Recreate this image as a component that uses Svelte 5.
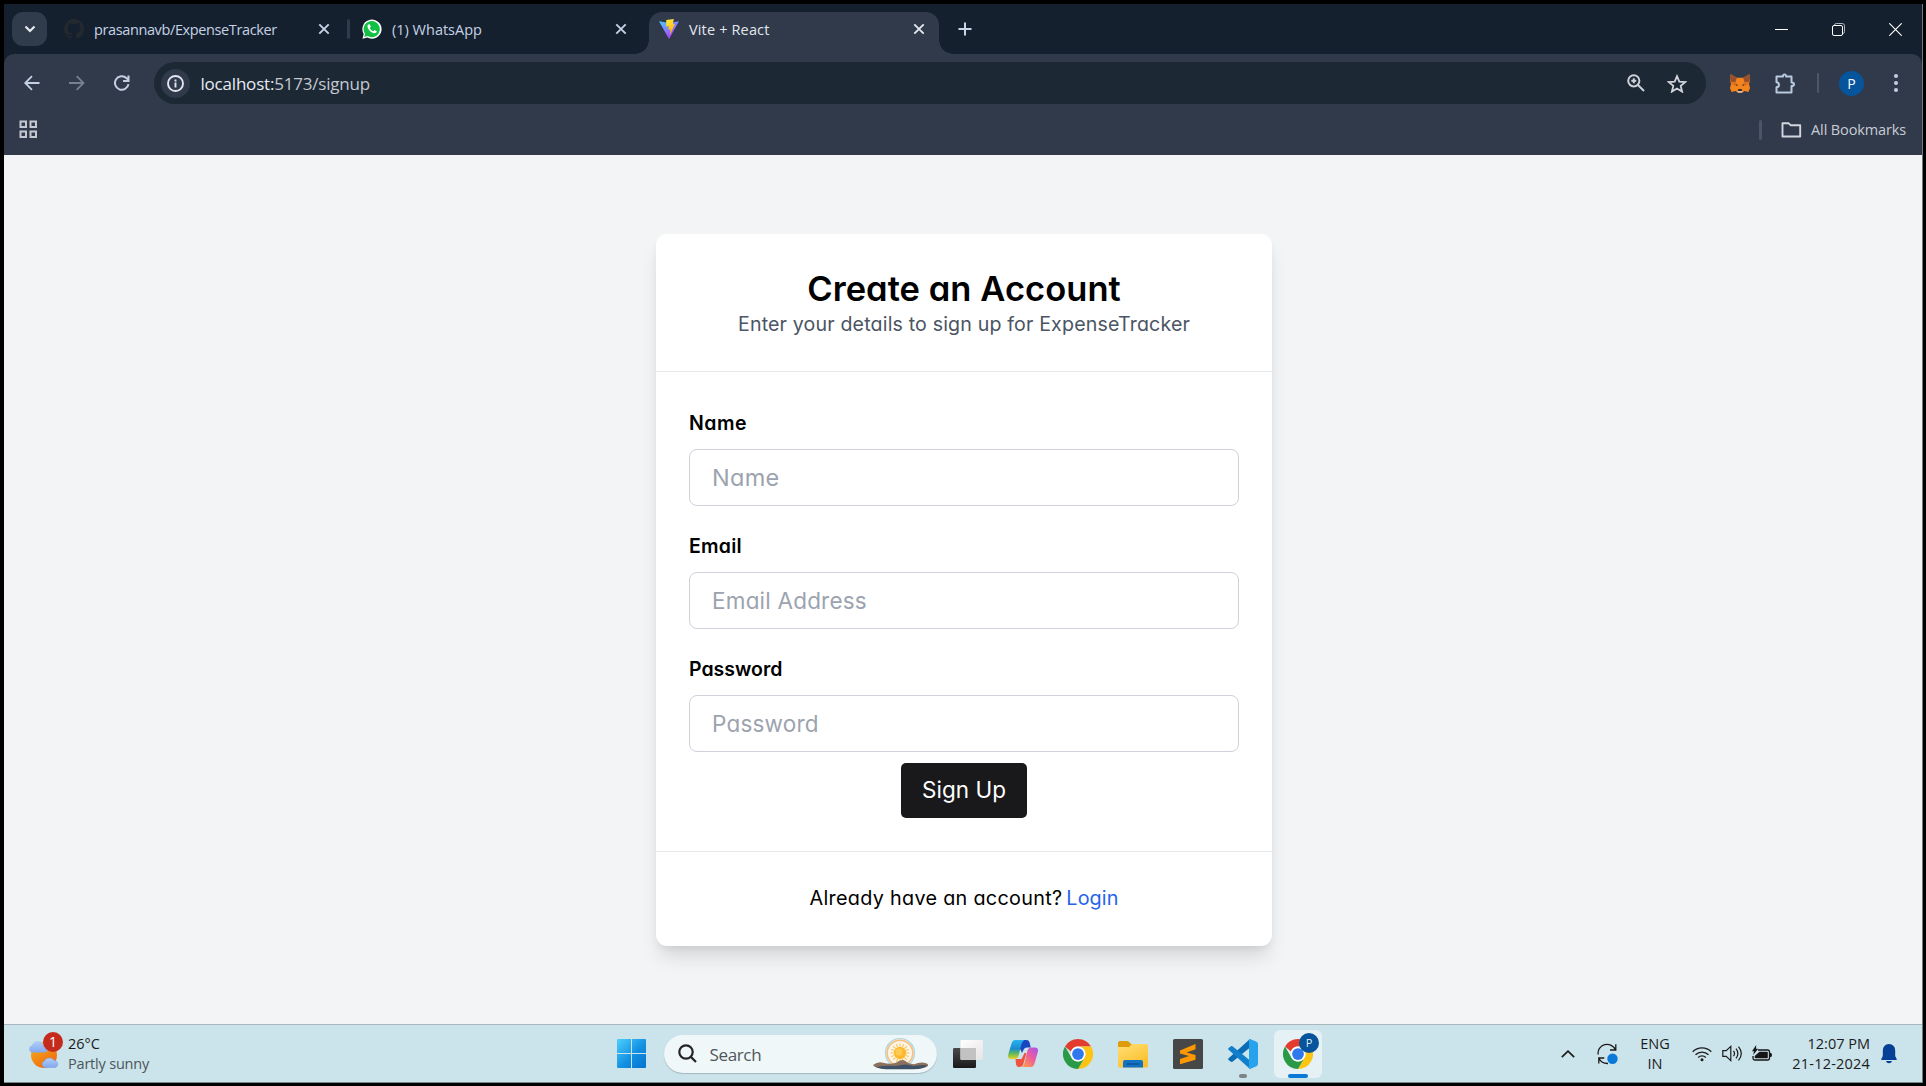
<script>
  const fields = [
    { label: 'Name', hint: 'Name', kind: 'short' },
    { label: 'Email', hint: 'Email Address', kind: 'mail' },
    { label: 'Password', hint: 'Password', kind: 'pass' }
  ];
  const rays = Array.from({ length: 16 }, (_, i) => i * 22.5);
</script>

{#snippet cross()}
  <svg class="cross" viewBox="0 0 12 12"><path d="M1.3 1.3l9.4 9.4M10.7 1.3l-9.4 9.4" /></svg>
{/snippet}

{#snippet chrome()}
  <svg class="app" viewBox="0 0 48 48">
    <path fill="#e33b2e" d="M24 0a24 24 0 0 1 20.8 12H24a12 12 0 0 0-11.3 8L3.2 12A24 24 0 0 1 24 0z" />
    <path fill="#fdc411" d="M44.8 12A24 24 0 0 1 24 48l10.4-18A12 12 0 0 0 34.4 18 12 12 0 0 0 24 12z" />
    <path fill="#2a9a47" d="M3.2 12l10.4 18A12 12 0 0 0 34.4 30L24 48A24 24 0 0 1 3.2 12z" />
    <circle cx="24" cy="24" r="12" fill="#fff" />
    <circle cx="24" cy="24" r="9.4" fill="#3079ec" />
  </svg>
{/snippet}

<div class="screen">
  <div class="window">
    <div class="strip">
      <button class="tabsearch" aria-label="Search tabs"><svg width="12" height="8" viewBox="0 0 12 8"><path d="M1.500 1.500L6 6l4.500-4.500" fill="none" stroke="#e6ebf2" stroke-width="2.200" /></svg></button>
      <div class="tab one">
        <svg width="20" height="20" viewBox="0 0 16 16"><path fill="#24292e" d="M8 0a8 8 0 0 0-2.530 15.590c.4.070.55-.17.55-.38v-1.490c-2.010.37-2.530-.49-2.690-.94-.09-.23-.48-.94-.82-1.130-.28-.15-.68-.52-.01-.53.63-.01 1.080.58 1.230.82.72 1.210 1.870.87 2.330.66.07-.52.28-.87.51-1.070-1.780-.2-3.640-.89-3.640-3.950 0-.87.31-1.590.82-2.150-.08-.2-.36-1.020.08-2.120 0 0 .67-.21 2.200.82a7.600 7.600 0 0 1 4 0c1.530-1.040 2.200-.82 2.200-.82.44 1.100.16 1.920.08 2.120.51.56.82 1.270.82 2.150 0 3.070-1.870 3.750-3.650 3.950.29.25.54.73.54 1.480v2.200c0 .21.15.46.55.38A8 8 0 0 0 8 0z" /></svg>
        <span class="ui tt1">prasannavb/ExpenseTracker</span>
        {@render cross()}
      </div>
      <i class="split"></i>
      <div class="tab two">
        <svg width="20" height="20" viewBox="0 0 20 20"><path fill="#fff" d="M.5 19.700L1.700 15A9.600 9.600 0 1 1 5.300 18.500z" /><path fill="#12c143" d="M2.300 17.900l.8-3.100a8.100 8.100 0 1 1 2.500 2.300z" /><path fill="#fff" d="M7 5.200c-.9 0-1.700 1.100-1.500 2.400.6 3.300 3.500 6.400 7 6.700 1.300 0 2.400-.9 2.200-2l-2.200-1.200-1.200 1.200c-1.600-.6-2.800-1.800-3.500-3.400l1-1.200-.9-2.300z" /></svg>
        <span class="ui">(1) WhatsApp</span>
        {@render cross()}
      </div>
      <div class="tab live">
        <svg width="20" height="20" viewBox="0 0 20 20">
          <defs>
            <linearGradient id="va" x1="0" y1="0" x2=".6" y2="1"><stop offset="0" stop-color="#41d1ff" /><stop offset="1" stop-color="#bd34fe" /></linearGradient>
            <linearGradient id="vb" x1=".4" y1="0" x2=".6" y2="1"><stop offset="0" stop-color="#ffe83a" /><stop offset="1" stop-color="#ffa800" /></linearGradient>
          </defs>
          <path fill="url(#va)" d="M0 2.200l10 1.700 10-1.700L10 20z" /><path fill="url(#vb)" d="M7.300 1L14.800 0l-1 5.300 2.100-.4-5 11 .6-5.600-2.200.4.600-3.700-2.800.7z" />
        </svg>
        <span class="ui tt3">Vite + React</span>
        {@render cross()}
      </div>
      <svg class="plus" width="14" height="14" viewBox="0 0 14 14"><path d="M7 .5v13M.5 7h13" stroke="#c9d5e6" stroke-width="2" /></svg>
      <div class="controls">
        <svg width="13" height="13" viewBox="0 0 13 13"><path d="M0 6.500h13" stroke="#fff" /></svg>
        <svg width="13" height="13" viewBox="0 0 13 13" fill="none" stroke="#fff"><path d="M2.500 2.500v-.2A1.800 1.800 0 0 1 4.300.5h5.900a2.300 2.300 0 0 1 2.300 2.300v5.900a1.800 1.800 0 0 1-1.800 1.800" stroke="#aeb5be" /><rect x=".5" y="2.500" width="10" height="10" rx="1.500" /></svg>
        <svg width="13" height="13" viewBox="0 0 13 13"><path d="M.3.3l12.400 12.400M12.700.3L.3 12.700" stroke="#fff" stroke-width="1.100" /></svg>
      </div>
    </div>

    <div class="panel">
      <div class="toolbar">
        <svg width="16" height="16" viewBox="0 0 16 16" fill="none" stroke="#c3d0e2" stroke-width="1.800"><path d="M15.500 8H1.500M8 1.200L1.200 8 8 14.800" /></svg>
        <svg width="16" height="16" viewBox="0 0 16 16" fill="none" stroke="#768090" stroke-width="1.800"><path d="M0 8h14.200M7.700 1.200L14.500 8l-6.800 6.800" /></svg>
        <svg width="16" height="16" viewBox="0 0 16 16" fill="none" stroke="#c3d0e2" stroke-width="2"><path d="M14.500 9.200A6.800 6.800 0 1 1 12.600 3.200L14.500 5.400M14.500 .5v5.600H9" /></svg>
        <div class="omnibox">
          <span class="info"><svg width="17" height="17" viewBox="0 0 17 17" fill="none" stroke="#e3e6ee" stroke-width="1.900"><circle cx="8.500" cy="8.500" r="7.500" /><path d="M8.500 7.500V12.500M8.500 4.500v1.900" /></svg></span>
          <span class="ui url"><b>localhost:</b>5173/signup</span>
          <svg class="mag" width="18" height="18" viewBox="0 0 18 18" fill="none" stroke="#cdd0d8" stroke-width="2"><circle cx="6.800" cy="6.800" r="5.600" /><path d="M11 11l6 6M6.800 4.300v5M4.300 6.800h5" /></svg>
          <svg width="20" height="19" viewBox="0 0 20 19" fill="none" stroke="#d2d4dc" stroke-width="1.800"><path d="M10 2.200l2.300 5.400 5.900.5-4.500 3.800 1.400 5.700-5.100-3.100-5.100 3.100 1.400-5.700L1.800 8.100l5.900-.5z" /></svg>
        </div>
        <svg class="fox" width="20" height="19" viewBox="0 0 20 19">
          <path fill="#f5841f" d="M.6.3l6.200 3.500h6.400L19.400.3 20 6l-1 4 1 4-1.600 4-4-1-1.900 1.500h-5L5.600 17l-4 1L0 14l1-4-1-4z" />
          <path fill="#96512b" d="M.6.3l6.200 3.500L5.500 8 1 8.200 0 5zM19.400.3l-6.200 3.500L14.500 8l4.500.2L20 5z" />
          <path fill="#d96d1a" d="M5.500 8L1 10l5 2 2-1zM14.500 8l4.500 2-5 2-2-1z" /><path fill="#35322f" d="M6 10.300l2 1-1.500.8zM14 10.300l-2 1 1.500.8zM8.300 15h3.400l.4 2H7.900z" /><path fill="#d7c1b3" d="M7.500 17h5l-.6 1.700H8.100z" />
        </svg>
        <svg class="puz" width="21" height="21" viewBox="0 0 21 21"><path fill="none" stroke="#b9c9de" stroke-width="2" stroke-linejoin="round" d="M1.500 3.500H8q-.2-2 1.500-2t1.500 2h5.500v6q2.500 0 2.500 1.800t-2.500 1.800v6.400H1.500v-5.200q2.500-.3 2.500-2.600T1.500 9.200z" /></svg>
        <i class="split thin"></i>
        <span class="me">P</span>
        <svg class="dots" width="4" height="18" viewBox="0 0 4 18" fill="#c3d0e2"><circle cx="2" cy="2" r="2" /><circle cx="2" cy="9" r="2" /><circle cx="2" cy="16" r="2" /></svg>
      </div>
      <div class="marks">
        <svg width="19" height="19" viewBox="0 0 19 19" fill="none" stroke="#c5c8d0" stroke-width="2"><path d="M1.500 1.500h5.500v5.500H1.500zM11.500 1.500h5.500v5.500h-5.500zM1.500 11.500h5.500v5.500H1.500zM11.500 11.500h5.500v5.500h-5.500z" /></svg>
        <i class="split"></i>
        <svg class="dir" width="21" height="16" viewBox="0 0 21 16" fill="none" stroke="#d3d6de" stroke-width="1.900" stroke-linejoin="round"><path d="M1.500 1.200h6l2 2h9.700v11.300H1.500z" /></svg>
        <span class="ui all">All Bookmarks</span>
      </div>
    </div>

    <main>
      <section class="card">
        <header>
          <h1>Create an Account</h1>
          <p>Enter your details to sign up for ExpenseTracker</p>
        </header>
        <form>
          {#each fields as f}
            <label><span class="lab {f.kind}">{f.label}</span><span class="box"><span class="hint {f.kind}">{f.hint}</span></span></label>
          {/each}
          <button type="button" class="go">Sign Up</button>
        </form>
        <footer><span class="ask">Already have an account?</span><a href="#login">Login</a></footer>
      </section>
    </main>

    <div class="taskbar">
      <div class="weather">
        <svg width="32" height="34" viewBox="0 0 32 34">
          <defs>
            <linearGradient id="sun" x1="0" y1="0" x2=".6" y2="1"><stop offset="0" stop-color="#f5b81f" /><stop offset="1" stop-color="#f0690f" /></linearGradient>
            <linearGradient id="cl" x1="0" y1="0" x2="0" y2="1"><stop offset="0" stop-color="#b3cff8" /><stop offset="1" stop-color="#82a8ee" /></linearGradient>
          </defs>
          <circle cx="16" cy="18" r="13" fill="url(#sun)" />
          <path fill="url(#cl)" d="M4 15.500a3.600 3.600 0 0 1 0-7A6 6 0 0 1 15 7a4.200 4.200 0 0 1 2 8.500z" />
          <path fill="url(#cl)" stroke="#7fa0e4" stroke-width=".6" d="M16.500 30.500a3.400 3.400 0 0 1 0-6.500 5.500 5.500 0 0 1 9.500-.6 3.700 3.700 0 0 1 1.500 7.100z" />
        </svg>
        <span class="count">1</span>
        <div class="lines"><span class="ui">26°C</span><span class="ui sky">Partly sunny</span></div>
      </div>
      <svg class="win" width="29" height="29" viewBox="0 0 29 29">
        <defs><linearGradient id="wn" gradientUnits="userSpaceOnUse" x1="0" y1="0" x2="29" y2="29"><stop offset="0" stop-color="#4cd0fd" /><stop offset=".55" stop-color="#1390e2" /><stop offset="1" stop-color="#0672ce" /></linearGradient></defs>
        <path fill="url(#wn)" d="M0 1a1 1 0 0 1 1-1h13v14H0zM15 0h13a1 1 0 0 1 1 1v13H15zM0 15h14v14H1a1 1 0 0 1-1-1zM15 15h14v13a1 1 0 0 1-1 1H15z" />
      </svg>
      <div class="search">
        <svg width="19" height="19" viewBox="0 0 19 19" fill="none" stroke="#242424" stroke-width="2.200"><circle cx="8" cy="8" r="6.700" /><path d="M12.600 12.600l5.400 5.400" /></svg>
        <span class="ui find">Search</span>
        <svg class="dawn" width="56" height="34" viewBox="0 0 56 34">
          <circle cx="27" cy="16" r="14.500" fill="#fdf1dc" stroke="#a9d5e6" stroke-width="1.200" /><circle cx="27" cy="16" r="12.800" fill="#fdf4e6" stroke="#f6bd7c" stroke-width="1.500" />
          {#each rays as r}<path d="M27 6.500v3" stroke="#f3c24c" transform="rotate({r} 27 16)" />{/each}
          <circle cx="27" cy="16" r="6.200" fill="#fdb92e" /><circle cx="26" cy="15" r="3.500" fill="#fecb52" />
          <path fill="#8b715e" d="M0 28q5-4 10-2.300 7 2 13 0 5-4 9-2 3 3 9 3.500 5-2 10-1.500 5 1 4 3-2 3-14 3.300H18Q2 32 0 28z" /><path fill="#3d5266" d="M3 30q10-2 20-1 10-3 17 0 8-1 14-1-2 4-14 4.300H18q-10 .2-15-2.300z" />
        </svg>
      </div>
      <svg class="view" width="30" height="28" viewBox="0 0 30 28">
        <defs><linearGradient id="dk" x1="0" y1="0" x2="0" y2="1"><stop offset="0" stop-color="#4a4a4a" /><stop offset="1" stop-color="#191919" /></linearGradient><linearGradient id="lt" x1="0" y1="0" x2="1" y2="1"><stop offset="0" stop-color="#fff" /><stop offset="1" stop-color="#e4e4e4" /></linearGradient></defs>
        <rect y="8" width="23" height="20" rx="1.200" fill="url(#dk)" /><rect x="7.500" width="22.500" height="20" rx="1.200" fill="url(#lt)" /><path fill="#c2c2c2" d="M7.500 8H23v12H8.500a1 1 0 0 1-1-1z" />
      </svg>
      <svg class="app" viewBox="0 0 30 30">
        <defs>
          <linearGradient id="c1" x1="0" y1="0" x2="0" y2="1"><stop offset="0" stop-color="#29b3f2" /><stop offset=".45" stop-color="#1a8cd0" /><stop offset=".7" stop-color="#5bb862" /><stop offset="1" stop-color="#ead320" /></linearGradient>
          <linearGradient id="c2" x1="1" y1="0" x2=".2" y2="1"><stop offset="0" stop-color="#a456ef" /><stop offset=".5" stop-color="#ee5ba0" /><stop offset="1" stop-color="#fc9a4d" /></linearGradient>
        </defs>
        <path fill="#1846c0" d="M8 1h10.500q2.300 0 3 2.300L22.800 8.500H19q-2.500 0-3.300 2L14 14z" />
        <path fill="#ee5340" d="M7.500 20h6l3-6 2 0-3.500 12q-1 2-4 2-2.500 0-3-3z" />
        <path fill="url(#c1)" d="M7 1h9.500q-2 1-3 4L10.500 17q-1 3-4 3H3q-4-.2-2.800-4.500L3.500 4.500Q4.500 1 7 1z" />
        <path fill="url(#c2)" d="M23 28h-9.500q2-1 3-4L19.500 11.500q1-3 4-3H27q4 .2 2.800 4.500L26.500 24.500Q25.500 28 23 28z" />
      </svg>
      {@render chrome()}
      <svg class="app" viewBox="0 0 30 30">
        <defs><linearGradient id="fd" x1="0" y1="0" x2=".6" y2="1"><stop offset="0" stop-color="#ffdf76" /><stop offset="1" stop-color="#fbc02d" /></linearGradient></defs>
        <path fill="#dd9c0b" d="M0 4q0-2 2-2h7q1 0 2 1l2 2h15v6H0z" /><path fill="url(#fd)" d="M0 8h11l3-3h14q2 0 2 2v20q0 1.500-1.500 1.500h-27Q0 28.500 0 27z" /><path fill="#1372c4" d="M5 28.500V23q0-2 2-2h16q2 0 2 2v5.500z" /><path stroke="#0a4f93" stroke-width="1.300" d="M8.500 25h13" />
      </svg>
      <svg class="app" viewBox="0 0 30 30"><rect width="30" height="30" rx="1.500" fill="#474747" /><path fill="#ff9800" d="M7 11.500L22.500 5v5.300l-9 3.200 9 2.600v4.700L7 25.300v-5.200l9-3.200-9-2.400z" /></svg>
      <div class="slot">
        <svg class="app" viewBox="0 0 30 30">
          <path fill="#0a6cb5" d="M22 0v8.500L4.500 22.800l-1.200.2L.6 21q-1-.8 0-1.800z" /><path fill="#1180cc" d="M22 30v-8.500L4.500 7.200 3.300 7 .6 9q-1 .8 0 1.800z" /><path fill="#27a2ec" d="M22 0l6.500 2.800Q30 3.500 30 5v20q0 1.500-1.500 2.200L22 30q-1 0-1-1V1q0-1 1-1z" />
        </svg>
        <i class="run"></i>
      </div>
      <div class="tile">
        {@render chrome()}
        <span class="badge">P</span><i class="run on"></i>
      </div>
      <div class="tray">
        <svg width="14" height="8" viewBox="0 0 14 8"><path d="M.8 7.200L7 1.200l6.200 6" fill="none" stroke="#1c1c1c" stroke-width="1.700" /></svg>
        <svg class="sync" width="21" height="22" viewBox="0 0 21 22"><path d="M1.200 11.500A9 8.600 0 0 1 18.500 7M18.800 1.200V7H13M1.800 20.500V15h5.500M2 15.500q2.500 5.200 9 5" fill="none" stroke="#1c1c1c" stroke-width="1.300" /><circle cx="15.500" cy="15.800" r="5.200" fill="#0a79d8" /></svg>
        <div class="lang"><span class="ui">ENG</span><span class="ui">IN</span></div>
        <svg class="wifi" width="20" height="16" viewBox="0 0 20 16" fill="none" stroke="#1c1c1c" stroke-width="1.300"><path d="M.7 5.800a13.200 13.200 0 0 1 18.600 0M3.500 8.800a9.200 9.200 0 0 1 13 0M6.200 11.500a5.400 5.400 0 0 1 7.600 0" /><circle cx="10" cy="13.700" r="1.500" fill="#1c1c1c" stroke="none" /></svg>
        <svg class="vol" width="21" height="17" viewBox="0 0 21 17" fill="none" stroke="#1c1c1c" stroke-width="1.200"><path d="M.8 5.700h3.400l4.600-4.300v14.200l-4.600-4.300H.8zM11.500 5.800q2 2.700 0 5.400M14 3.700q3.800 4.800 0 9.600M16.500 1.600q5.600 6.900 0 13.800" /></svg>
        <svg class="bat" width="20" height="17" viewBox="0 0 20 17"><path d="M6 5h9.500q2 0 2 2v6q0 2-2 2H3q-2 0-2-2v-2" fill="none" stroke="#161616" stroke-width="1.300" /><path fill="#161616" d="M7.500 6.800H15q.8 0 .8.8v4.800q0 .8-.8.8H3.500q-.8 0-.8-.8V11zM18 8h.7q1.300 0 1.300 2t-1.300 2H18zM4.200 0L0 6.200h2L1.200 10l5-6.200H4z" /></svg>
        <div class="clock"><span class="ui">12:07 PM</span><span class="ui date">21-12-2024</span></div>
        <svg class="bell" width="16" height="20" viewBox="0 0 16 20" fill="#063f96"><path d="M8 0q6 .5 6.200 6.500V12l1.600 3.200q.2.800-.6.800H.8q-.8 0-.6-.8L1.800 12V6.500Q2 .5 8 0zM5 17h6q-.5 2.300-3 2.300T5 17z" /></svg>
      </div>
    </div>
  </div>
</div>

<style>
  :global(body) { background: #000; }
  .screen { box-sizing: border-box; width: 1926px; height: 1086px; padding: 4px 3px 3px 4px; background: #000; overflow: hidden; }
  .window { display: flex; flex-direction: column; height: 1079px; box-sizing: border-box; border-right: 1px solid #74777c; }
  svg { display: block; flex: none; }
  .ui { font-family: 'Open Sans', sans-serif; white-space: nowrap; }

  .strip { display: flex; align-items: center; height: 50px; background: #15202f; }
  .tabsearch { width: 35px; height: 34px; margin-left: 8px; padding: 0; border: 0; border-radius: 11px; background: #303b4b; display: grid; place-items: center; }
  .tab { display: flex; align-items: center; color: #c5d2e4; font-size: 14.5px; }
  .tab .ui { margin-left: 10px; }
  .tt1 { letter-spacing: -.38px; }
  .tt3 { letter-spacing: .15px; }
  .cross { width: 12px; height: 12px; margin-left: auto; fill: none; stroke: #c5d2e4; stroke-width: 1.900; }
  .one { width: 266px; margin-left: 17px; }
  .two { width: 265px; margin-left: 12px; }
  .split { flex: none; width: 3px; height: 20px; margin-left: 17px; border-radius: 2px; background: #2f3a4b; }
  .live { position: relative; align-self: flex-end; box-sizing: border-box; width: 290px; height: 42px; margin-left: 22px; padding: 0 14px 8px 10px; border-radius: 13px 13px 0 0; background: #303a4b; color: #e3e6ed; }
  .live .cross { stroke: #e3e6ed; }
  .live::before, .live::after { content: ''; position: absolute; bottom: 0; width: 14px; height: 14px; }
  .live::before { left: -14px; background: radial-gradient(circle at 0 0, transparent 13.500px, #303a4b 14px); }
  .live::after { right: -14px; background: radial-gradient(circle at 100% 0, transparent 13.500px, #303a4b 14px); }
  .plus { margin-left: 19px; }
  .controls { display: flex; gap: 44px; margin: 0 20px 0 auto; }

  .panel { background: linear-gradient(#15202f 12px, #303a4b 12px); }
  .toolbar { display: flex; align-items: center; box-sizing: border-box; height: 50px; padding: 8px 23px 0 20px; border-radius: 10px 10px 0 0; background: #303a4b; gap: 29px; }
  .omnibox { flex: none; display: flex; align-items: center; box-sizing: border-box; width: 1552px; height: 42px; margin-left: -5px; padding: 0 19px 0 7px; border-radius: 21px; background: #1c2834; }
  .info { display: grid; place-items: center; width: 29px; height: 29px; border-radius: 50%; background: #303a4b; }
  .url { margin-left: 10.500px; color: #c3c8d1; font-size: 17px; letter-spacing: -.2px; }
  .url b { font-weight: 400; color: #e8ebf2; }
  .mag { margin: 0 22px 0 auto; }
  .fox { margin-left: -5px; }
  .puz { margin-left: -4px; }
  .thin { width: 2px; margin-left: -8px; background: #4b5667; }
  .me { flex: none; display: grid; place-items: center; width: 25px; height: 25px; margin-left: -9px; border-radius: 50%; background: #05549c; color: #fff; font: 14px 'Open Sans', sans-serif; }
  .dots { margin-left: 1px; }
  .marks { display: flex; align-items: center; height: 51px; padding: 0 16px 0 15px; background: #303a4b; color: #c9ccd4; font-size: 14.5px; }
  .marks .split { margin-left: auto; background: #4a5567; }
  .dir { margin-left: 19px; }
  .all { margin-left: 9px; letter-spacing: -.13px; }

  main { flex: 1; display: flex; justify-content: center; align-items: flex-start; padding-top: 79px; background: #f3f4f6; color: #000; font-family: Inter, sans-serif; font-feature-settings: 'cv11'; }
  .card { display: flex; flex-direction: column; box-sizing: border-box; width: 616px; height: 712px; margin-left: 2px; border-radius: 11px; background: #fff; box-shadow: 0 14px 20px -4px rgba(0, 0, 0, .12), 0 5px 8px -3px rgba(0, 0, 0, .08); }
  header { box-sizing: border-box; height: 138px; padding-top: 32px; border-bottom: 1px solid #e5e7eb; text-align: center; }
  h1 { margin: 0; font-size: 34.5px; line-height: 45px; font-weight: 600; letter-spacing: .05px; }
  p { margin: 0; font-size: 19.6px; line-height: 27px; letter-spacing: .16px; color: #4b5563; }
  form { display: flex; flex-direction: column; box-sizing: border-box; height: 480px; padding: 36px 33px 0; border-bottom: 1px solid #e5e7eb; }
  label { display: flex; flex-direction: column; height: 123px; }
  .lab { align-self: flex-start; font-size: 19.5px; line-height: 30px; font-weight: 600; }
  .lab.short { letter-spacing: .5px; }
  .lab.mail { letter-spacing: .2px; }
  .box { display: flex; align-items: center; box-sizing: border-box; height: 57px; margin-top: 11px; padding: 0 0 1px 22px; border: 1px solid #cfd2da; border-radius: 8px; }
  .hint { font-size: 22.5px; letter-spacing: .2px; color: #9ca3af; }
  .hint.short { font-size: 23.5px; letter-spacing: .3px; }
  .go { align-self: center; width: 126px; height: 55px; margin-top: -14px; padding: 0 0 2px; border: 0; border-radius: 5px; background: #19191b; color: #fff; font: inherit; font-size: 22.5px; flex: none; }
  footer { display: flex; justify-content: center; padding-top: 33px; font-size: 19.8px; line-height: 27px; gap: 4px; }
  .ask { letter-spacing: .3px; }
  a { color: #2563eb; text-decoration: none; letter-spacing: .1px; }

  .taskbar { display: flex; align-items: center; box-sizing: border-box; height: 59px; border-top: 1px solid #a9b6bd; border-bottom: 1px solid #7b8689; background: #cbe3ea; color: #1c1c1c; }
  .weather { position: relative; display: flex; align-items: center; width: 613px; padding-left: 24px; box-sizing: border-box; flex: none; }
  .count { position: absolute; left: 39px; top: -2px; width: 20px; height: 20px; border-radius: 50%; background: #c42b1c; color: #fff; font: 14px/20px 'Open Sans', sans-serif; text-align: center; }
  .lines, .lang, .clock { display: flex; flex-direction: column; font-size: 14.5px; line-height: 20px; }
  .lines { margin-left: 8px; }
  .sky { color: #4b565b; letter-spacing: -.2px; }
  .search { display: flex; align-items: center; box-sizing: border-box; width: 273px; height: 38px; margin-left: 18px; padding: 0 8px 0 14px; border-radius: 19px; background: #eff7f9; box-shadow: 0 1px 1px #a3b7bf; flex: none; }
  .find { margin: 1px 0 0 12.500px; font-size: 17px; letter-spacing: -.35px; color: #505659; }
  .dawn { margin-left: auto; }
  .view { margin-left: 16px; }
  .app { width: 30px; height: 30px; margin-left: 25px; }
  .slot { position: relative; }
  .tile { position: relative; flex: none; display: flex; align-items: center; justify-content: center; width: 48px; height: 48px; margin-left: 16px; border-radius: 6px; background: #e6f1f5; }
  .tile .app { margin: 0; }
  .badge { position: absolute; left: 25px; top: 3px; width: 20px; height: 20px; border-radius: 50%; background: #05549c; color: #dfe9f5; font: 11px/20px 'Open Sans', sans-serif; text-align: center; }
  .run { position: absolute; bottom: -9px; right: 11px; width: 8px; height: 4px; border-radius: 2px; background: #7c8487; }
  .run.on { bottom: 0; right: 14px; width: 20px; background: #0a79d8; }
  .tray { display: flex; align-items: center; margin: 0 25px 0 auto; }
  .sync { margin-left: 22px; }
  .lang { align-items: center; width: 40px; margin-left: 17px; }
  .wifi { margin-left: 17px; }
  .vol { margin-left: 10px; }
  .bat { margin-left: 9px; }
  .clock { align-items: flex-end; width: 98px; }
  .date { letter-spacing: .2px; }
  .bell { margin-left: 11px; }
</style>
